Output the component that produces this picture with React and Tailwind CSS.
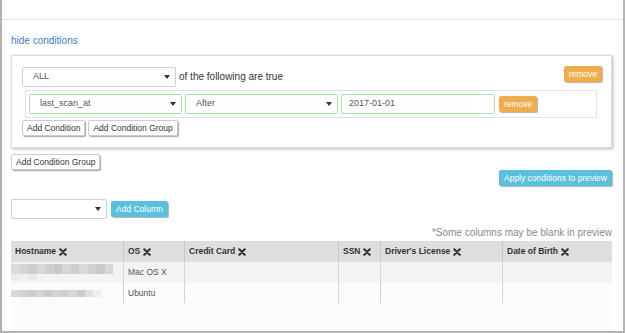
const font = { fontFamily: '"Liberation Sans", Arial, sans-serif' };

function Caret() {
  return (
    <svg width="6" height="4" viewBox="0 0 6 4" className="shrink-0">
      <path d="M0 0 L6 0 L3 4 Z" fill="#333" />
    </svg>
  );
}

function CloseX() {
  return (
    <svg width="8" height="8" viewBox="0 0 8 8" className="ml-[3px] shrink-0">
      <path d="M1.3 1.3 L6.7 6.7 M6.7 1.3 L1.3 6.7" stroke="#333" strokeWidth="2.2" strokeLinecap="round" />
    </svg>
  );
}

function Select({ value, green, className = '' }) {
  return (
    <div
      className={`flex items-center justify-between h-[20px] bg-white rounded-[2px] pl-[10px] pr-[5px] text-[9px] text-[#555] border ${
        green ? 'border-[#a8e6a8]' : 'border-[#cfcfcf]'
      } ${className}`}
    >
      <span>{value}</span>
      <Caret />
    </div>
  );
}

function Btn({ children, className = '' }) {
  return (
    <button className={`h-[16px] px-[4px] bg-white border border-[#cdcdcd] rounded-[2px] text-[8.5px] leading-none text-[#333] shadow-[1px_1px_1px_rgba(0,0,0,0.35)] ${className}`}>
      {children}
    </button>
  );
}

function ColorBtn({ children, color, className = '' }) {
  return (
    <button className={`h-[16px] px-[5px] rounded-[2px] text-[8.5px] leading-none text-white shadow-[1px_1px_1px_rgba(0,0,0,0.3)] ${color} ${className}`}>
      {children}
    </button>
  );
}

function Blur({ colors, h, w }) {
  return (
    <div className="flex">
      {colors.map((c, i) => (
        <div key={i} style={{ background: c, width: w, height: h }} />
      ))}
    </div>
  );
}

const headers = ['Hostname', 'OS', 'Credit Card', 'SSN', "Driver's License", 'Date of Birth'];

export default function App() {
  return (
    <div style={font} className="w-[625px] h-[333px] flex flex-col bg-white border-x-2 border-b-2 border-[#b3b3b3]">
      <div className="h-[20px] shrink-0 border-b border-[#e6e6e6]" />

      <div className="flex-1 flex flex-col pl-[9px] pr-[11px]">
        <div className="mt-[15px] text-[10px] leading-[12px] text-[#3b7dbf]">hide conditions</div>

        {/* condition panel */}
        <div className="mt-[8px] border border-[#dddddd] bg-white shadow-[1px_1px_3px_rgba(0,0,0,0.3)] pl-[10px] pr-[9px] pt-[10px] pb-[11px]">
          <div className="flex items-start">
            <Select value="ALL" className="w-[154px] mt-[1px]" />
            <span className="ml-[3px] mt-[5px] text-[10px] leading-[12px] text-[#333]">of the following are true</span>
            <ColorBtn color="bg-[#f0ad4e]" className="ml-auto">remove</ColorBtn>
          </div>

          <div className="mt-[3px] ml-[3px] mr-[5px] border border-[#e3e3e3] p-[3px] flex items-center gap-[3px]">
            <Select value="last_scan_at" green className="w-[153px]" />
            <Select value="After" green className="w-[153px]" />
            <div className="w-[154px] h-[20px] bg-white border border-[#a8e6a8] rounded-[2px] pl-[7px] flex items-center text-[9px] text-[#555]">
              2017-01-01
            </div>
            <ColorBtn color="bg-[#f0ad4e]" className="ml-[1px]">remove</ColorBtn>
          </div>

          <div className="mt-[2px] flex gap-[3px]">
            <Btn>Add Condition</Btn>
            <Btn>Add Condition Group</Btn>
          </div>
        </div>

        <div className="mt-[6px] flex">
          <Btn>Add Condition Group</Btn>
        </div>

        <div className="flex justify-end">
          <ColorBtn color="bg-[#5bc0de]" className="h-[15px]">Apply conditions to preview</ColorBtn>
        </div>

        <div className="mt-[13px] flex items-center gap-[4px]">
          <Select value="" className="w-[96px]" />
          <ColorBtn color="bg-[#5bc0de]">Add Column</ColorBtn>
        </div>

        <div className="mt-[8px] text-right text-[10px] leading-[12px] text-[#8a8a8a]">
          *Some columns may be blank in preview
        </div>

        {/* preview table */}
        <div className="mt-[2px] flex-1 bg-[#fbfbfb]">
          <div className="grid grid-cols-[112px_61px_154px_42px_122px_1fr]">
            {headers.map((h, i) => (
              <div
                key={h}
                className={`h-[21px] bg-[#dedede] flex items-center px-[4px] text-[8.5px] font-bold text-[#333] ${
                  i > 0 ? 'border-l border-[#c8c8c8]' : ''
                }`}
              >
                {h}
                <CloseX />
              </div>
            ))}

            <div className="h-[21px] bg-[#f3f3f3] pt-[2px]">
              <Blur
                h={10}
                w={8.5}
                colors={['#dcdcdc', '#d4d4d4', '#cbcbcb', '#d8d8d8', '#cfcfcf', '#c8c8c8', '#d6d6d6', '#cdcdcd', '#dadada', '#d0d0d0', '#c9c9c9', '#d7d7d7']}
              />
              <Blur h={6} w={8.7} colors={['#ececec', '#f0f0f0', '#e9e9e9']} />
            </div>
            {['Mac OS X', '', '', '', ''].map((t, i) => (
              <div key={i} className="h-[21px] bg-[#f3f3f3] border-l border-[#d4d4d4] flex items-center px-[4px] text-[8.5px] text-[#555]">
                {t}
              </div>
            ))}

            <div className="h-[20px] flex items-center">
              <Blur
                h={7}
                w={8.2}
                colors={['#d9d9d9', '#d2d2d2', '#cdcdcd', '#d6d6d6', '#cacaca', '#d3d3d3', '#cfcfcf', '#d8d8d8', '#cccccc', '#e0e0e0', '#eeeeee']}
              />
            </div>
            {['Ubuntu', '', '', '', ''].map((t, i) => (
              <div key={i} className="h-[20px] border-l border-[#d4d4d4] flex items-center px-[4px] text-[8.5px] text-[#555]">
                {t}
              </div>
            ))}
          </div>
        </div>
      </div>
    </div>
  );
}
